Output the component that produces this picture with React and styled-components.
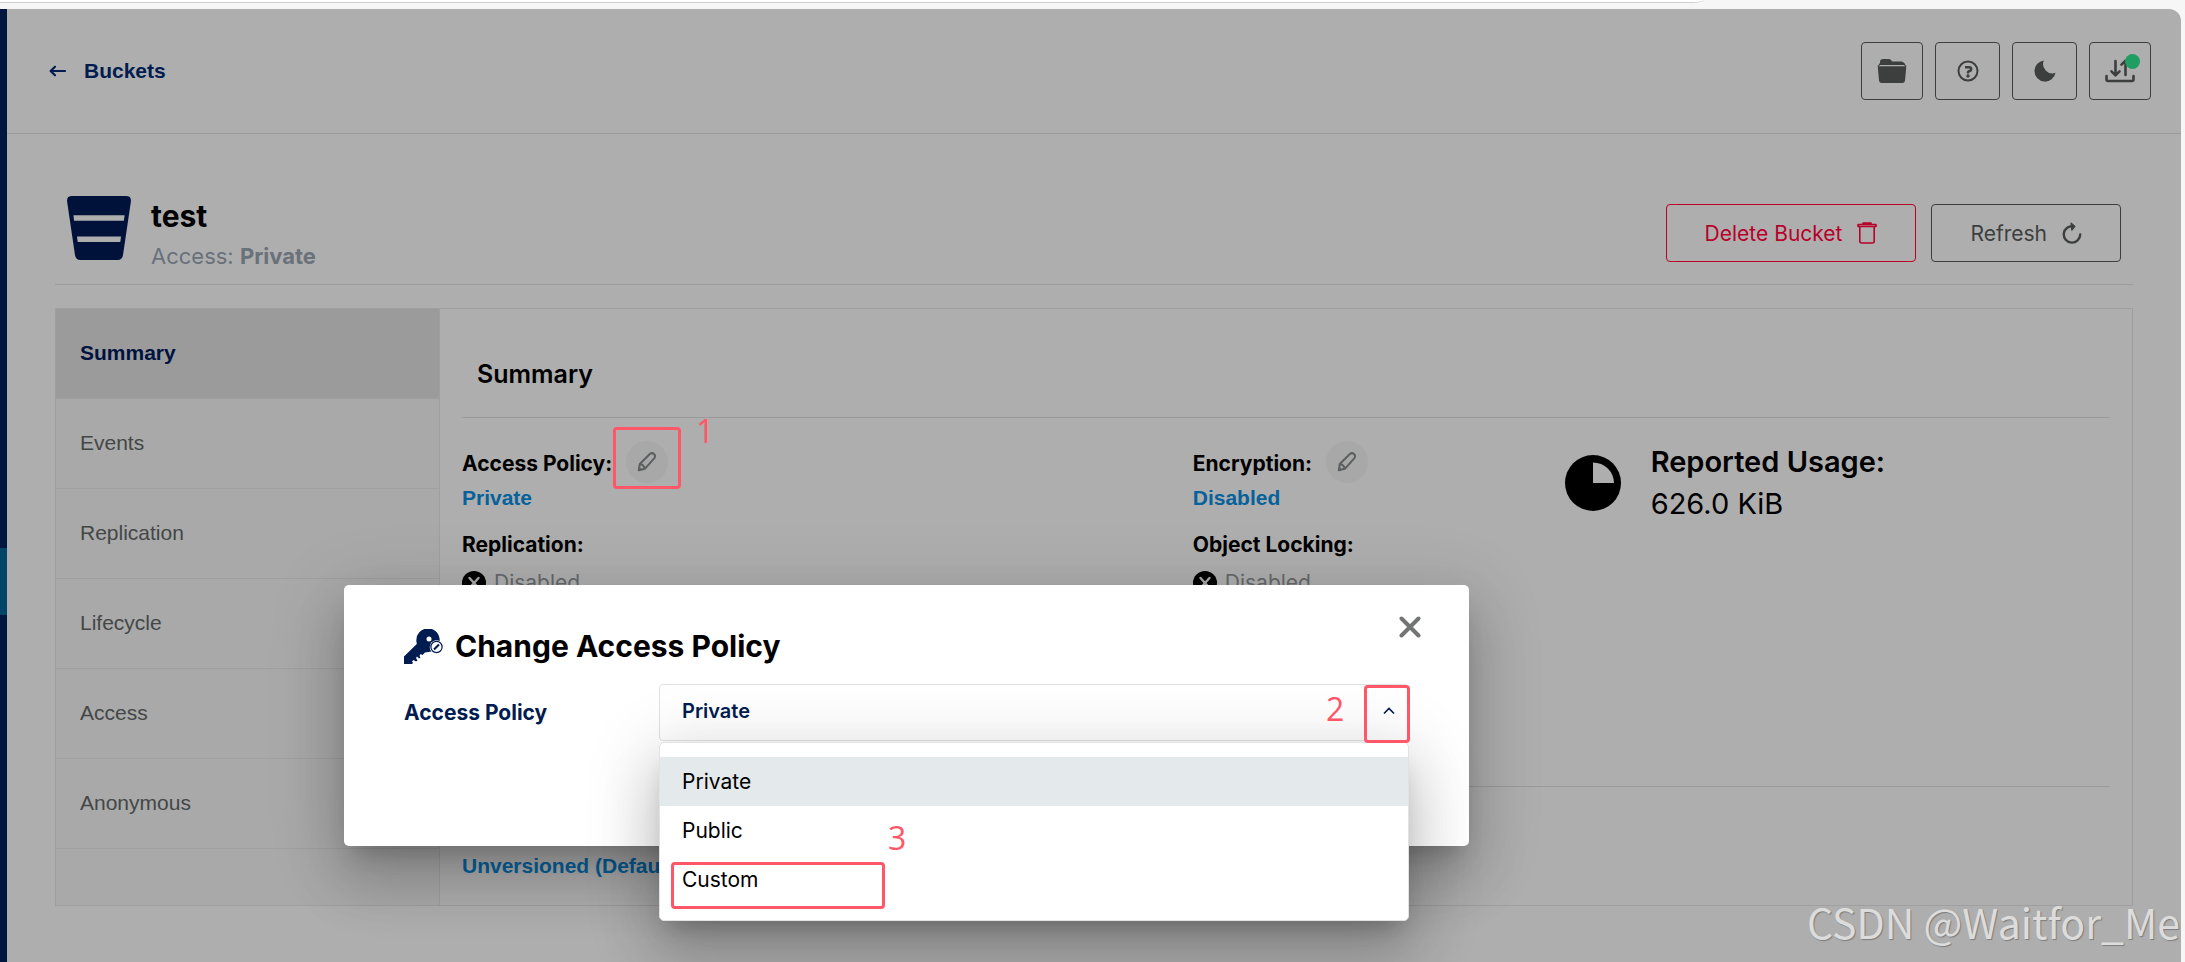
import React from 'react';
import styled, { createGlobalStyle } from 'styled-components';

const tabs = ['Summary', 'Events', 'Replication', 'Lifecycle', 'Access', 'Anonymous'];
const policies = ['Private', 'Public', 'Custom'];

const App = () => {
    return (
        <Window>
            <GlobalStyle />
            <BrowserBar>
                <AddressBar />
            </BrowserBar>
            <Frame>
                <SideNav>
                    <ActiveNav />
                </SideNav>
                <Page>
                    <TopBar>
                        <BackLink href="#buckets">
                            <BackIcon />
                            Buckets
                        </BackLink>
                        <TopActions>
                            <IconButton aria-label="Object browser"><FolderIcon /></IconButton>
                            <IconButton aria-label="Help" $wide><HelpIcon /></IconButton>
                            <IconButton aria-label="Dark mode" $wide><MoonIcon /></IconButton>
                            <IconButton aria-label="Transfers">
                                <TransferIcon />
                                <Dot />
                            </IconButton>
                        </TopActions>
                    </TopBar>
                    <Content>
                        <TitleRow>
                            <BucketIcon />
                            <TitleText>
                                <h1>test</h1>
                                <p>Access: <b>Private</b></p>
                            </TitleText>
                            <TitleActions>
                                <ActionButton $danger>Delete Bucket <TrashIcon /></ActionButton>
                                <ActionButton>Refresh <RefreshIcon /></ActionButton>
                            </TitleActions>
                        </TitleRow>
                        <Panel>
                            <TabList>
                                {tabs.map((tab, i) => (
                                    <Tab key={tab} $active={i === 0}>{tab}</Tab>
                                ))}
                            </TabList>
                            <TabContent>
                                <SectionTitle>Summary</SectionTitle>
                                <SummaryGrid>
                                    <Details>
                                        <div>
                                            <LabelRow>
                                                <span>Access Policy:</span>
                                                <EditButton aria-label="Edit access policy"><PencilIcon /></EditButton>
                                            </LabelRow>
                                            <ValueLink href="#policy">Private</ValueLink>
                                            <Label>Replication:</Label>
                                            <Status><DisabledIcon /> Disabled</Status>
                                        </div>
                                        <div>
                                            <LabelRow>
                                                <span>Encryption:</span>
                                                <EditButton aria-label="Edit encryption"><PencilIcon /></EditButton>
                                            </LabelRow>
                                            <ValueLink href="#encryption">Disabled</ValueLink>
                                            <Label>Object Locking:</Label>
                                            <Status><DisabledIcon /> Disabled</Status>
                                        </div>
                                    </Details>
                                    <Usage>
                                        <UsageIcon />
                                        <div>
                                            <b>Reported Usage:</b>
                                            <p>626.0 KiB</p>
                                        </div>
                                    </Usage>
                                </SummaryGrid>
                                <Versioning>
                                    <ValueLink href="#versioning">Unversioned (Default)</ValueLink>
                                </Versioning>
                            </TabContent>
                        </Panel>
                    </Content>
                </Page>
            </Frame>
            <Overlay>
                <Modal role="dialog" aria-labelledby="modal-title">
                    <CloseButton aria-label="Close"><CloseIcon /></CloseButton>
                    <ModalTitle id="modal-title">
                        <KeyIcon />
                        Change Access Policy
                    </ModalTitle>
                    <Field>
                        <label htmlFor="policy">Access Policy</label>
                        <SelectBox>
                            <select id="policy" defaultValue="Private">
                                {policies.map((p) => <option key={p}>{p}</option>)}
                            </select>
                            <ChevronIcon />
                            <Menu role="listbox" aria-label="Access Policy">
                                {policies.map((p, i) => (
                                    <MenuItem key={p} role="option" aria-selected={i === 0}>{p}</MenuItem>
                                ))}
                            </Menu>
                        </SelectBox>
                    </Field>
                </Modal>
            </Overlay>
            <Mark $x={613} $y={427} $w={68} $h={62} />
            <MarkNumber $x={696} $y={409}>1</MarkNumber>
            <Mark $x={1364} $y={685} $w={46} $h={58} />
            <MarkNumber $x={1326} $y={687}>2</MarkNumber>
            <Mark $x={671} $y={862} $w={214} $h={47} />
            <MarkNumber $x={888} $y={816}>3</MarkNumber>
            <Watermark>CSDN @Waitfor_Me</Watermark>
        </Window>
    );
};

/* icons */

const BackIcon = () => (
    <svg width="18" height="12" viewBox="0 0 18 12" fill="none" stroke="currentColor" strokeWidth="2.2" strokeLinecap="round" strokeLinejoin="round">
        <path d="M16 6H2M6 1.8 1.6 6 6 10.2" />
    </svg>
);

const FolderIcon = () => (
    <svg width="30" height="26" viewBox="0 0 30 26" fill="currentColor">
        <path d="M3 6V4.200Q3 1 6 1h6q2.200 0 3 2.500h9.500Q27 3.500 27.500 6v1H3z" />
        <path d="M2.500 8.200h25Q29.300 8.200 29.200 10L28 22.500Q27.800 25 25.300 25H4.700Q2.300 25 2 22.500L.9 10Q.8 8.200 2.500 8.200z" />
        <path d="M1 9 3 5.500M29 9l-2-3.500" stroke="currentColor" strokeWidth="1.200" />
    </svg>
);

const HelpIcon = () => (
    <svg width="22" height="22" viewBox="0 0 22 22" fill="none" stroke="currentColor">
        <circle cx="11" cy="11" r="9.500" strokeWidth="2" />
        <path d="M8 7.200h4.200q2 0 2 1.900 0 1.700-1.600 1.900-1.600.2-1.600 1.800v.6" strokeWidth="2.400" />
        <circle cx="11" cy="16" r="1.700" fill="currentColor" stroke="none" />
    </svg>
);

const MoonIcon = () => (
    <svg width="22" height="22" viewBox="0 0 22 22" fill="currentColor">
        <path d="M9.800.5A10.600 10.600 0 1 0 21.500 12.800 9.300 9.300 0 0 1 9.800.5z" />
    </svg>
);

const TransferIcon = () => (
    <svg width="30" height="24" viewBox="0 0 30 24" fill="none" stroke="currentColor" strokeWidth="2.600" strokeLinecap="round" strokeLinejoin="round">
        <path d="M1.500 17v3.500Q1.500 22 3 22h24q1.500 0 1.500-1.500V17" />
        <path d="M10.500 2v14M6.500 12.300l4 4 4-4M20.500 16V2M16.500 5.700l4-4 4 4" />
    </svg>
);

const TrashIcon = () => (
    <svg width="20" height="22" viewBox="0 0 20 22" fill="none" stroke="currentColor" strokeWidth="1.600" strokeLinejoin="round">
        <path d="M1 2.500h18v2H1zM6 2.500V1h8v1.500M2.800 4.500V19q0 2 2 2h10.400q2 0 2-2V4.500" />
    </svg>
);

const RefreshIcon = () => (
    <svg width="20" height="22" viewBox="0 0 20 22" fill="none" stroke="currentColor" strokeWidth="2.400" strokeLinecap="round" strokeLinejoin="round">
        <path d="M18.200 12.500A8.200 8.200 0 1 1 11.500 4.400" />
        <path d="M9.200 1.200 12.800 4.400 9.800 8z" fill="currentColor" strokeWidth="1.400" />
    </svg>
);

const BucketIcon = () => (
    <svg width="64" height="64" viewBox="0 0 64 64">
        <path fill="#00113a" fillRule="evenodd" d="M5 0h54q5.500 0 4.900 5.500L56 59q-.7 5-5.500 5h-37Q8.700 64 8 59L.1 5.500Q-.5 0 5 0zM6.400 19.300l.7 5.500h49.800l.7-5.500zM10 40.500l.7 5.500h42.600l.7-5.500z" />
    </svg>
);

const PencilIcon = () => (
    <svg width="20" height="20" viewBox="0 0 20 20" fill="none" stroke="currentColor" strokeWidth="2" strokeLinejoin="round">
        <path d="M1.800 18.200l1-6.200L12.600 2.200q2.400-2 4.400-.2t.2 4.400L7.800 16.800z" />
        <path d="M2.800 12q4 .5 5 4.800M1.800 18.200l2-2" />
    </svg>
);

const DisabledIcon = () => (
    <svg width="24" height="24" viewBox="0 0 24 24">
        <circle cx="12" cy="12" r="12" fill="#000" />
        <path d="M7.500 7l9 10M16.500 7l-9 10" stroke="#a9a9a9" strokeWidth="2.400" strokeLinecap="round" />
    </svg>
);

const UsageIcon = () => (
    <svg width="56" height="56" viewBox="0 0 56 56">
        <circle cx="28" cy="28" r="28" fill="#000" />
        <path d="M28 7.500V28h21A21 20.500 0 0 0 28 7.500z" fill="#aeaeae" />
    </svg>
);

const KeyIcon = () => (
    <svg width="39" height="35" viewBox="0 0 39 35">
        <path fill="#001c50" d="M12.300 11.500A11.700 11.700 0 1 1 26 22.700L21 23.500 18.500 26l-2-1-1 2 1 1.500-1.500 1-2-2-1 1.500 1.500 2.500-1.500 1-2.500-1.500L8 32.500 9 34l-1 1H0v-7.500L12.800 15z" />
        <circle cx="25" cy="10" r="2.500" fill="#fff" />
        <circle cx="32.500" cy="18" r="6.800" fill="#fff" />
        <circle cx="32.500" cy="18" r="5.600" fill="#fff" stroke="#001c50" strokeWidth="1.200" />
        <path d="M30 20.500l5-5" stroke="#001c50" strokeWidth="2.200" />
    </svg>
);

const CloseIcon = () => (
    <svg width="22" height="22" viewBox="0 0 22 22" fill="none" stroke="#737575" strokeWidth="4" strokeLinecap="round">
        <path d="M2.500 2.500l17 17M19.500 2.500l-17 17" />
    </svg>
);

const ChevronIcon = () => (
    <svg width="12" height="8" viewBox="0 0 12 8" fill="none" stroke="#001c50" strokeWidth="1.600">
        <path d="M1 6.500l5-5 5 5" />
    </svg>
);

/* styles */

const GlobalStyle = createGlobalStyle`
* {
    box-sizing: border-box;
}
body {
    margin: 0;
    background: #f6f6f6;
    font-family: Inter, sans-serif;
    font-size: 21px;
    color: #000;
}
h1, h2, p {
    margin: 0;
}
button, select {
    font-family: inherit;
    font-size: inherit;
}
a {
    text-decoration: none;
}
svg {
    display: block;
    flex-shrink: 0;
}
`;

const Window = styled.div`
min-height: 100vh;
display: flex;
flex-direction: column;
position: relative;
overflow: hidden;
`;

const BrowserBar = styled.div`
height: 9px;
`;

const AddressBar = styled.div`
width: 78%;
height: 3px;
background: #fff;
border-bottom: 1px solid #cfcfcf;
border-bottom-right-radius: 12px 3px;
`;

const Frame = styled.div`
flex: 1;
display: flex;
margin-right: 4px;
`;

const SideNav = styled.nav`
width: 7px;
padding-top: 539px;
background: #00163f;
`;

const ActiveNav = styled.div`
height: 67px;
background: #004467;
`;

const Page = styled.main`
flex: 1;
background: #aeaeae;
border-top-right-radius: 12px;
`;

const TopBar = styled.header`
height: 125px;
display: flex;
align-items: center;
justify-content: space-between;
padding: 0 30px 0 42px;
border-bottom: 1px solid #9b9b9b;
`;

const BackLink = styled.a`
display: flex;
align-items: center;
gap: 17px;
color: #001c50;
font-family: "Liberation Sans", Arial, sans-serif;
font-weight: bold;
`;

const TopActions = styled.div`
display: flex;
gap: 12px;
`;

const IconButton = styled.button`
position: relative;
width: ${({ $wide }) => ($wide ? '65px' : '62px')};
height: 58px;
display: flex;
align-items: center;
justify-content: center;
padding: 0;
color: #3c3f3e;
background: none;
border: 1px solid #3c3f3e;
border-radius: 4px;
`;

const Dot = styled.span`
position: absolute;
top: 11px;
right: 10px;
width: 15px;
height: 15px;
border-radius: 50%;
background: #1f9d62;
`;

const Content = styled.div`
padding: 0 48px 56px;
`;

const TitleRow = styled.div`
display: flex;
align-items: flex-start;
padding: 62px 12px 6px;
border-bottom: 1px solid #9b9b9b;
`;

const TitleText = styled.div`
flex: 1;
padding-top: 2px;
margin-left: 20px;
h1 {
    font-size: 30px;
    line-height: 36px;
}
p {
    font-size: 22px;
    line-height: 44px;
    color: #69717a;
}
`;

const TitleActions = styled.div`
display: flex;
gap: 15px;
margin-top: 8px;
`;

const ActionButton = styled.button`
height: 58px;
display: flex;
align-items: center;
gap: 15px;
padding: 0 38px;
color: ${({ $danger }) => ($danger ? '#b8002a' : '#3c3f3e')};
background: none;
border: 1px solid;
border-radius: 4px;
`;

const Panel = styled.div`
display: flex;
margin-top: 23px;
border: 1px solid #9f9f9f;
`;

const TabList = styled.div`
width: 384px;
background: #a9a9a9;
border-right: 1px solid #9f9f9f;
`;

const Tab = styled.button`
display: block;
width: 100%;
height: 90px;
padding: 0 24px 2px;
text-align: left;
font-family: "Liberation Sans", Arial, sans-serif;
font-weight: ${({ $active }) => ($active ? 'bold' : 'normal')};
color: ${({ $active }) => ($active ? '#00123f' : '#434747')};
background: ${({ $active }) => ($active ? '#9b9b9b' : 'none')};
border: none;
border-bottom: 1px solid #9f9f9f;
`;

const TabContent = styled.div`
flex: 1;
padding: 0 22px;
`;

const SectionTitle = styled.h2`
padding: 47px 15px 25px;
font-size: 25px;
font-weight: 600;
line-height: 36px;
border-bottom: 1px solid #9b9b9b;
`;

const SummaryGrid = styled.div`
min-height: 369px;
display: grid;
grid-template-columns: 2fr 1fr;
padding-top: 23px;
border-bottom: 1px solid #9b9b9b;
`;

const Details = styled.div`
display: grid;
grid-template-columns: 731fr 368fr;
align-content: start;
`;

const LabelRow = styled.div`
height: 42px;
display: flex;
align-items: center;
gap: 14px;
font-weight: bold;
span {
    padding-top: 2px;
}
`;

const Label = styled.div`
margin-top: 16px;
line-height: 32px;
font-weight: bold;
`;

const EditButton = styled.button`
width: 42px;
height: 42px;
display: flex;
align-items: center;
justify-content: center;
padding: 0;
color: #5c5f60;
background: #a8a8a8;
border: none;
border-radius: 50%;
`;

const ValueLink = styled.a`
display: block;
line-height: 30px;
font-family: "Liberation Sans", Arial, sans-serif;
font-weight: bold;
color: #07619b;
`;

const Status = styled.div`
display: flex;
align-items: center;
gap: 8px;
margin-top: 10px;
line-height: 24px;
color: #66696b;
`;

const Usage = styled.div`
display: flex;
align-items: center;
align-self: start;
gap: 30px;
padding-left: 4px;
font-size: 29px;
line-height: 42px;
b {
    font-weight: 600;
}
`;

const Versioning = styled.div`
padding: 64px 0 24px;
`;

const Overlay = styled.div`
position: absolute;
inset: 0;
display: flex;
align-items: flex-start;
justify-content: center;
padding: 585px 372px 0 0;
`;

const shadow = `0 16px 22px -10px rgba(0, 0, 0, 0.2),
    0 36px 57px 4px rgba(0, 0, 0, 0.14),
    0 14px 69px 12px rgba(0, 0, 0, 0.12)`;

const Modal = styled.div`
position: relative;
width: 1125px;
padding: 40px 60px 105px;
background: #fff;
border-radius: 5px;
box-shadow: ${shadow};
`;

const ModalTitle = styled.h2`
display: flex;
align-items: center;
gap: 12px;
font-size: 30px;
line-height: 42px;
`;

const CloseButton = styled.button`
position: absolute;
top: 31px;
right: 48px;
padding: 0;
background: none;
border: none;
`;

const Field = styled.div`
display: flex;
align-items: center;
margin-top: 17px;
label {
    width: 255px;
    font-weight: bold;
    color: #001c50;
}
`;

const SelectBox = styled.div`
position: relative;
flex: 1;
select {
    display: block;
    width: 100%;
    height: 57px;
    padding: 0 22px 4px;
    font-size: 20px;
    font-weight: 600;
    color: #001c50;
    background: #fff;
    border: 1px solid #e2e2e2;
    border-radius: 4px;
    appearance: none;
}
& > svg {
    position: absolute;
    top: 23px;
    right: 14px;
}
`;

const Menu = styled.div`
position: absolute;
top: 58px;
left: 0;
right: 0;
padding: 14px 0 16px;
background: #fff;
border: 1px solid #e2e2e2;
border-radius: 5px;
box-shadow: ${shadow};
`;

const MenuItem = styled.button`
display: block;
width: 100%;
height: 49px;
padding: 0 22px;
text-align: left;
color: #000;
background: ${(props) => (props['aria-selected'] ? '#e4e9eb' : 'none')};
border: none;
`;

/* numbered step marks drawn over the page */
const Mark = styled.div`
position: absolute;
left: ${({ $x }) => $x}px;
top: ${({ $y }) => $y}px;
width: ${({ $w }) => $w}px;
height: ${({ $h }) => $h}px;
border: 3px solid #ff5668;
border-radius: 4px;
`;

const MarkNumber = styled.span`
position: absolute;
left: ${({ $x }) => $x}px;
top: ${({ $y }) => $y}px;
font-family: "Open Sans", sans-serif;
font-size: 32px;
line-height: 44px;
color: #ff5668;
`;

const Watermark = styled.div`
position: absolute;
right: 5px;
bottom: 11px;
font-family: "Noto Sans CJK SC", sans-serif;
font-size: 41px;
line-height: 60px;
color: #dcdcdc;
text-shadow: 1px 1px 1px #7d7d7d;
`;

export default App;
